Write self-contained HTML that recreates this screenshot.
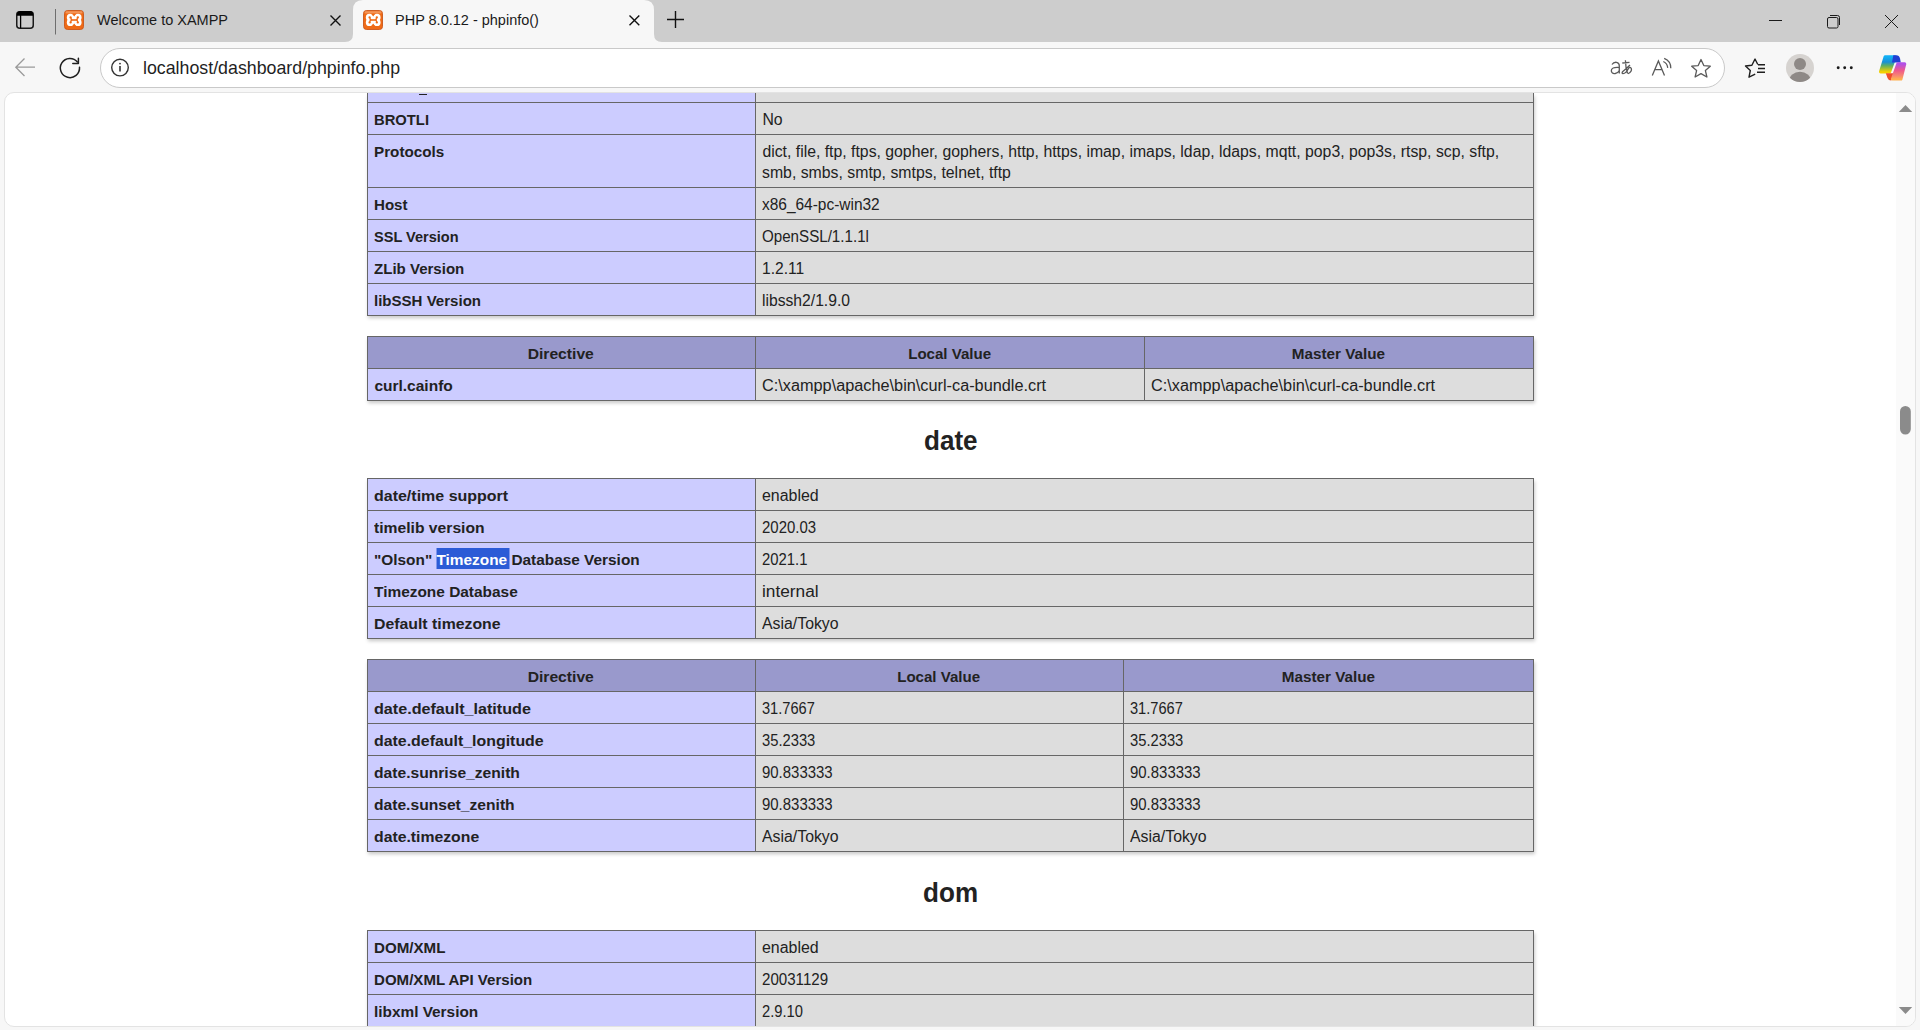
<!DOCTYPE html>
<html><head><meta charset="utf-8"><title>phpinfo</title>
<style>
html,body{margin:0;padding:0;width:1920px;height:1030px;overflow:hidden;background:#f7f7f7;font-family:"Liberation Sans", sans-serif;}
#tabs{position:absolute;left:0;top:0;width:1920px;height:42px;background:#cdcdcd;}
#toolbar{position:absolute;left:0;top:42px;width:1920px;height:51px;background:#f7f7f7;}
#view{position:absolute;left:4px;top:92px;width:1910px;height:933px;background:#fff;border:1px solid #e3e3e3;border-radius:10px;overflow:hidden;}
#page{position:absolute;left:-5px;top:-93px;width:1920px;height:1030px;}
.ln{position:absolute;background:#666666;}
.tr,.tb,.h2{position:absolute;white-space:nowrap;color:#222222;line-height:21px;}
.tr{font-size:15.8px;margin-top:-16px;}
.tb{font-size:15.5px;font-weight:bold;margin-top:-16px;}
.h2{font-size:28px;font-weight:bold;margin-top:-25px;line-height:32px;} .h2 span{display:inline-block;transform:scaleX(0.93);}
.sel{background:#2c5bd6;color:#fff;padding:2.9px 0 1.2px 0;box-shadow:2.5px 0 0 #2c5bd6;}
.ic{position:absolute;}
.tabt{position:absolute;white-space:nowrap;color:#1a1a1a;font-size:15.5px;line-height:20px;margin-top:-15.4px;transform:scaleX(0.935);transform-origin:0 0;}
.url{position:absolute;white-space:nowrap;color:#1f1f1f;font-size:17.8px;line-height:22px;margin-top:-17px;}
#omni{position:absolute;left:100px;top:6px;width:1623px;height:38px;border:1px solid #c9c9c9;border-radius:20px;background:#fff;}
</style></head><body>

<div id="tabs">
 <svg class="ic" style="left:0;top:0" width="720" height="42" viewBox="0 0 720 42">
  <path d="M345 42 Q353 42 353 34 L353 10 Q353 0 363 0 L644 0 Q654 0 654 10 L654 34 Q654 42 662 42 Z" fill="#f7f7f7"/>
  <rect x="16.75" y="11.75" width="16.5" height="16.5" rx="3" fill="none" stroke="#1a1a1a" stroke-width="1.5"/>
  <path d="M17 13.5 Q17.3 11 20 11 L30 11 Q32.8 11 33 13.5 L33 15.7 L17 15.7 Z" fill="#000"/>
  <line x1="20.6" y1="15" x2="20.6" y2="28.2" stroke="#000" stroke-width="1.3"/>
  <line x1="55.5" y1="9" x2="55.5" y2="34.5" stroke="#6e6e6e" stroke-width="1"/>
  <path d="M330.5 15.5 L340.5 25.5 M340.5 15.5 L330.5 25.5" stroke="#111" stroke-width="1.4"/>
  <path d="M629.5 15.5 L639.3 25.3 M639.3 15.5 L629.5 25.3" stroke="#111" stroke-width="1.4"/>
  <path d="M675.5 11 L675.5 28 M667 19.5 L684 19.5" stroke="#111" stroke-width="1.4"/>
 </svg>
 <svg class="ic" style="left:64px;top:10px" width="20" height="20" viewBox="0 0 20 20">
  <rect x="0.5" y="0.5" width="19" height="19" rx="3" fill="#ef6a16" stroke="#c9561a" stroke-width="0.9"/>
  <rect x="1.5" y="1.3" width="17" height="2.2" rx="1" fill="#f4a06a" opacity="0.8"/>
  <g fill="#fff"><circle cx="6.4" cy="7.4" r="3.6"/><circle cx="14" cy="7.4" r="3.6"/><circle cx="6.4" cy="12.4" r="3.6"/><circle cx="14" cy="12.4" r="3.6"/><rect x="6.4" y="5.5" width="7.6" height="9"/></g>
  <g fill="#ef6a16"><circle cx="6.6" cy="7.4" r="1.15"/><circle cx="13.8" cy="7.4" r="1.15"/><circle cx="6.6" cy="12.4" r="1.15"/><circle cx="13.8" cy="12.4" r="1.15"/><rect x="6.6" y="9.2" width="7.2" height="1.6"/><path d="M6.6 7.4 L7.6 9.6 L6.6 12.4 M13.8 7.4 L12.8 9.6 L13.8 12.4" stroke="#ef6a16" stroke-width="1.2" fill="none"/>
  <path d="M8.5 3.8 L10.2 6.6 L11.9 3.8 Z"/><path d="M8.5 16.2 L10.2 13.4 L11.9 16.2 Z"/></g>
 </svg>
 <svg class="ic" style="left:363px;top:10px" width="20" height="20" viewBox="0 0 20 20">
  <rect x="0.5" y="0.5" width="19" height="19" rx="3" fill="#ef6a16" stroke="#c9561a" stroke-width="0.9"/>
  <rect x="1.5" y="1.3" width="17" height="2.2" rx="1" fill="#f4a06a" opacity="0.8"/>
  <g fill="#fff"><circle cx="6.4" cy="7.4" r="3.6"/><circle cx="14" cy="7.4" r="3.6"/><circle cx="6.4" cy="12.4" r="3.6"/><circle cx="14" cy="12.4" r="3.6"/><rect x="6.4" y="5.5" width="7.6" height="9"/></g>
  <g fill="#ef6a16"><circle cx="6.6" cy="7.4" r="1.15"/><circle cx="13.8" cy="7.4" r="1.15"/><circle cx="6.6" cy="12.4" r="1.15"/><circle cx="13.8" cy="12.4" r="1.15"/><rect x="6.6" y="9.2" width="7.2" height="1.6"/><path d="M6.6 7.4 L7.6 9.6 L6.6 12.4 M13.8 7.4 L12.8 9.6 L13.8 12.4" stroke="#ef6a16" stroke-width="1.2" fill="none"/>
  <path d="M8.5 3.8 L10.2 6.6 L11.9 3.8 Z"/><path d="M8.5 16.2 L10.2 13.4 L11.9 16.2 Z"/></g>
 </svg>
 <div class="tabt" style="left:97px;top:25px">Welcome to XAMPP</div>
 <div class="tabt" style="left:395px;top:25px">PHP 8.0.12 - phpinfo()</div>
 <svg class="ic" style="left:1760px;top:0" width="160" height="42" viewBox="1760 0 160 42">
  <line x1="1769" y1="20.5" x2="1782" y2="20.5" stroke="#1a1a1a" stroke-width="1"/>
  <rect x="1827.5" y="17.5" width="10.5" height="10.5" rx="1.5" fill="none" stroke="#1a1a1a" stroke-width="1"/>
  <path d="M1830 15.5 L1837.5 15.5 Q1839.5 15.5 1839.5 17.5 L1839.5 25" fill="none" stroke="#1a1a1a" stroke-width="1"/>
  <path d="M1885 15 L1898 28 M1898 15 L1885 28" stroke="#1a1a1a" stroke-width="1"/>
 </svg>
</div>
<div id="toolbar">
 <div id="omni"></div>
 <div class="url" style="left:143px;top:32px">localhost/dashboard/phpinfo.php</div>
 <svg class="ic" style="left:0;top:0" width="1920" height="51" viewBox="0 42 1920 51">
  <path d="M15.5 67.2 L35 67.2 M24.5 58.5 L15.8 67.2 L24.5 76" fill="none" stroke="#9a9a9a" stroke-width="1.3"/>
  <path d="M77.4 62 A9.6 9.6 0 1 0 79.5 67.3" fill="none" stroke="#1f1f1f" stroke-width="1.5" stroke-linecap="round"/>
  <path d="M72.8 63.6 L78.4 63.6 L78.4 58.2" fill="none" stroke="#1f1f1f" stroke-width="1.5" stroke-linecap="round" stroke-linejoin="round"/>
  <circle cx="120" cy="67.6" r="8.3" fill="none" stroke="#333" stroke-width="1.4"/>
  <line x1="120" y1="66" x2="120" y2="71.5" stroke="#333" stroke-width="1.6"/>
  <circle cx="120" cy="63.6" r="0.9" fill="#333"/>
  
  <g fill="none" stroke="#5a5a5a" stroke-width="1.3">
   <path d="M1612 64.5 Q1613.5 62 1616.5 62.3 Q1619.5 62.8 1619.3 66 L1619.3 73.5 M1619.3 67.5 Q1611 66.8 1611.3 71 Q1611.8 74 1615.3 73.5 Q1618 73 1619.3 70.5"/>
   <path d="M1622.3 63 L1629.5 62.3 M1625.4 60.3 Q1625.6 68 1627.6 73.5 M1630 65 Q1626 69 1622.5 71.8 Q1621.5 73.5 1623 73.6 Q1626 73.5 1628.5 68.5 Q1630 66.2 1631.3 68.5 Q1632.3 71.5 1628 73.8"/>
   <path d="M1652.3 75.5 L1658.4 61 L1664.5 75.5 M1654.8 69.6 L1662 69.6"/>
   <path d="M1663.3 61.5 A7.5 7.5 0 0 1 1667.7 67.9 M1664.2 58.3 A10.5 10.5 0 0 1 1670.8 68.3"/>
   <path d="M1701 59.5 L1703.8 65.6 L1710.3 66.2 L1705.4 70.6 L1706.9 77 L1701 73.6 L1695.1 77 L1696.6 70.6 L1691.7 66.2 L1698.2 65.6 Z" stroke-linejoin="round"/>
  </g>
  <g fill="none" stroke="#1f1f1f" stroke-width="1.4" stroke-linejoin="round">
   <path d="M1757.8 64.5 L1755 59 L1751.9 65.3 L1745.5 66 L1750.3 70.5 L1749 77.2 L1755.2 74.2"/>
   <path d="M1758 64.8 L1765 64.8 M1758 68.5 L1765 68.5 M1757 72.3 L1765 72.3"/>
  </g>
  <circle cx="1800" cy="68" r="14" fill="#d6d3d0"/>
  <circle cx="1800" cy="64" r="6" fill="#8e8986"/>
  <clipPath id="pc"><circle cx="1800" cy="68" r="14"/></clipPath>
  <ellipse cx="1800" cy="81.5" rx="11" ry="9.8" fill="#8e8986" clip-path="url(#pc)"/>
  <g fill="#1a1a1a"><circle cx="1838.2" cy="67.7" r="1.45"/><circle cx="1844.7" cy="67.7" r="1.45"/><circle cx="1851.3" cy="67.7" r="1.45"/></g>
  <defs>
   <linearGradient id="cg1" x1="0" y1="0" x2="0" y2="1"><stop offset="0" stop-color="#12b0f5"/><stop offset="0.35" stop-color="#1890d8"/><stop offset="0.6" stop-color="#60b060"/><stop offset="1" stop-color="#f5d000"/></linearGradient>
   <linearGradient id="cg2" x1="0" y1="0" x2="0" y2="1"><stop offset="0" stop-color="#b050e8"/><stop offset="0.45" stop-color="#f05a8a"/><stop offset="0.8" stop-color="#f88a70"/><stop offset="1" stop-color="#ffb050"/></linearGradient>
  </defs>
  <g transform="translate(1872 50)" stroke-linejoin="round">
  <path d="M13.2 6.8 L23.1 6.8 L17.6 21.8 L8.6 21.8 Z" fill="url(#cg1)" stroke="url(#cg1)" stroke-width="3.2"/>
  <path d="M21.3 5.2 L24.3 5.2 Q27.2 5.2 28 8.5 L28.8 12.4 L20 12.4 Z" fill="#2140d2"/>
  <path d="M13.8 23.2 L21.7 23.2 L19.2 30.6 Q16.5 30.6 15.5 28 Z" fill="#f04e2a"/>
  <path d="M25.9 13.9 L32.7 13.9 L28.9 29 L20.5 29 Z" fill="url(#cg2)" stroke="url(#cg2)" stroke-width="3.2"/>
 </g>

 </svg>
</div>

<div id="view"><div id="page">
<div style="position:absolute;left:367px;top:93px;width:1167px;height:223px;box-shadow:1px 2.5px 3.5px #cccccc"></div>
<div style="position:absolute;left:367px;top:93px;width:388px;height:9px;background:#ccccff"></div>
<div style="position:absolute;left:755px;top:93px;width:778px;height:9px;background:#dddddd"></div>
<div style="position:absolute;left:367px;top:102px;width:388px;height:32px;background:#ccccff"></div>
<div style="position:absolute;left:755px;top:102px;width:778px;height:32px;background:#dddddd"></div>
<div style="position:absolute;left:367px;top:134px;width:388px;height:53px;background:#ccccff"></div>
<div style="position:absolute;left:755px;top:134px;width:778px;height:53px;background:#dddddd"></div>
<div style="position:absolute;left:367px;top:187px;width:388px;height:32px;background:#ccccff"></div>
<div style="position:absolute;left:755px;top:187px;width:778px;height:32px;background:#dddddd"></div>
<div style="position:absolute;left:367px;top:219px;width:388px;height:32px;background:#ccccff"></div>
<div style="position:absolute;left:755px;top:219px;width:778px;height:32px;background:#dddddd"></div>
<div style="position:absolute;left:367px;top:251px;width:388px;height:32px;background:#ccccff"></div>
<div style="position:absolute;left:755px;top:251px;width:778px;height:32px;background:#dddddd"></div>
<div style="position:absolute;left:367px;top:283px;width:388px;height:32px;background:#ccccff"></div>
<div style="position:absolute;left:755px;top:283px;width:778px;height:32px;background:#dddddd"></div>
<div class="ln" style="left:367px;top:102px;width:1167px;height:1px"></div>
<div class="ln" style="left:367px;top:134px;width:1167px;height:1px"></div>
<div class="ln" style="left:367px;top:187px;width:1167px;height:1px"></div>
<div class="ln" style="left:367px;top:219px;width:1167px;height:1px"></div>
<div class="ln" style="left:367px;top:251px;width:1167px;height:1px"></div>
<div class="ln" style="left:367px;top:283px;width:1167px;height:1px"></div>
<div class="ln" style="left:367px;top:315px;width:1167px;height:1px"></div>
<div class="ln" style="left:367px;top:93px;width:1px;height:223px"></div>
<div class="ln" style="left:755px;top:93px;width:1px;height:223px"></div>
<div class="ln" style="left:1533px;top:93px;width:1px;height:223px"></div>
<div class="tb" style="left:374.4px;top:125px;transform:scaleX(0.9536);transform-origin:0 0">BROTLI</div>
<div class="tr" style="left:762.4px;top:125px;transform:scaleX(1.0000);transform-origin:0 0">No</div>
<div class="tb" style="left:374.4px;top:157px;transform:scaleX(0.9829);transform-origin:0 0">Protocols</div>
<div class="tr" style="left:762.4px;top:157px;transform:scaleX(1.0000);transform-origin:0 0">dict, file, ftp, ftps, gopher, gophers, http, https, imap, imaps, ldap, ldaps, mqtt, pop3, pop3s, rtsp, scp, sftp,</div>
<div class="tr" style="left:762.4px;top:178px;transform:scaleX(1.0020);transform-origin:0 0">smb, smbs, smtp, smtps, telnet, tftp</div>
<div class="tb" style="left:374.4px;top:210px;transform:scaleX(0.9735);transform-origin:0 0">Host</div>
<div class="tr" style="left:762.4px;top:210px;transform:scaleX(0.9783);transform-origin:0 0">x86_64-pc-win32</div>
<div class="tb" style="left:374.4px;top:242px;transform:scaleX(0.9378);transform-origin:0 0">SSL Version</div>
<div class="tr" style="left:762.4px;top:242px;transform:scaleX(0.9586);transform-origin:0 0">OpenSSL/1.1.1l</div>
<div class="tb" style="left:374.4px;top:274px;transform:scaleX(0.9707);transform-origin:0 0">ZLib Version</div>
<div class="tr" style="left:762.4px;top:274px;transform:scaleX(0.9878);transform-origin:0 0">1.2.11</div>
<div class="tb" style="left:374.4px;top:306px;transform:scaleX(0.9706);transform-origin:0 0">libSSH Version</div>
<div class="tr" style="left:762.4px;top:306px;transform:scaleX(0.9920);transform-origin:0 0">libssh2/1.9.0</div>
<div style="position:absolute;left:419px;top:94px;width:8.3px;height:1.3px;background:#222"></div>
<div style="position:absolute;left:367px;top:336px;width:1167px;height:65px;box-shadow:1px 2.5px 3.5px #cccccc"></div>
<div style="position:absolute;left:367px;top:336px;width:388px;height:32px;background:#9999cc"></div>
<div style="position:absolute;left:755px;top:336px;width:389px;height:32px;background:#9999cc"></div>
<div style="position:absolute;left:1144px;top:336px;width:389px;height:32px;background:#9999cc"></div>
<div style="position:absolute;left:367px;top:368px;width:388px;height:32px;background:#ccccff"></div>
<div style="position:absolute;left:755px;top:368px;width:389px;height:32px;background:#dddddd"></div>
<div style="position:absolute;left:1144px;top:368px;width:389px;height:32px;background:#dddddd"></div>
<div class="ln" style="left:367px;top:336px;width:1167px;height:1px"></div>
<div class="ln" style="left:367px;top:368px;width:1167px;height:1px"></div>
<div class="ln" style="left:367px;top:400px;width:1167px;height:1px"></div>
<div class="ln" style="left:367px;top:336px;width:1px;height:65px"></div>
<div class="ln" style="left:755px;top:336px;width:1px;height:65px"></div>
<div class="ln" style="left:1144px;top:336px;width:1px;height:65px"></div>
<div class="ln" style="left:1533px;top:336px;width:1px;height:65px"></div>
<div class="tb" style="left:367px;top:359px;width:388px;text-align:center"><span style="display:inline-block;transform:scaleX(1.0109)">Directive</span></div>
<div class="tb" style="left:755px;top:359px;width:389px;text-align:center"><span style="display:inline-block;transform:scaleX(0.9726)">Local Value</span></div>
<div class="tb" style="left:1144px;top:359px;width:389px;text-align:center"><span style="display:inline-block;transform:scaleX(0.9840)">Master Value</span></div>
<div class="tb" style="left:374.4px;top:391px;transform:scaleX(1.0000);transform-origin:0 0">curl.cainfo</div>
<div class="tr" style="left:762.4px;top:391px;transform:scaleX(1.0305);transform-origin:0 0">C:\xampp\apache\bin\curl-ca-bundle.crt</div>
<div class="tr" style="left:1151.4px;top:391px;transform:scaleX(1.0305);transform-origin:0 0">C:\xampp\apache\bin\curl-ca-bundle.crt</div>
<div class="h2" style="left:367px;top:450px;width:1167px;text-align:center"><span>date</span></div>
<div style="position:absolute;left:367px;top:478px;width:1167px;height:161px;box-shadow:1px 2.5px 3.5px #cccccc"></div>
<div style="position:absolute;left:367px;top:478px;width:388px;height:32px;background:#ccccff"></div>
<div style="position:absolute;left:755px;top:478px;width:778px;height:32px;background:#dddddd"></div>
<div style="position:absolute;left:367px;top:510px;width:388px;height:32px;background:#ccccff"></div>
<div style="position:absolute;left:755px;top:510px;width:778px;height:32px;background:#dddddd"></div>
<div style="position:absolute;left:367px;top:542px;width:388px;height:32px;background:#ccccff"></div>
<div style="position:absolute;left:755px;top:542px;width:778px;height:32px;background:#dddddd"></div>
<div style="position:absolute;left:367px;top:574px;width:388px;height:32px;background:#ccccff"></div>
<div style="position:absolute;left:755px;top:574px;width:778px;height:32px;background:#dddddd"></div>
<div style="position:absolute;left:367px;top:606px;width:388px;height:32px;background:#ccccff"></div>
<div style="position:absolute;left:755px;top:606px;width:778px;height:32px;background:#dddddd"></div>
<div class="ln" style="left:367px;top:478px;width:1167px;height:1px"></div>
<div class="ln" style="left:367px;top:510px;width:1167px;height:1px"></div>
<div class="ln" style="left:367px;top:542px;width:1167px;height:1px"></div>
<div class="ln" style="left:367px;top:574px;width:1167px;height:1px"></div>
<div class="ln" style="left:367px;top:606px;width:1167px;height:1px"></div>
<div class="ln" style="left:367px;top:638px;width:1167px;height:1px"></div>
<div class="ln" style="left:367px;top:478px;width:1px;height:161px"></div>
<div class="ln" style="left:755px;top:478px;width:1px;height:161px"></div>
<div class="ln" style="left:1533px;top:478px;width:1px;height:161px"></div>
<div class="tb" style="left:374.4px;top:501px;transform:scaleX(1.0315);transform-origin:0 0">date/time support</div>
<div class="tr" style="left:762.4px;top:501px;transform:scaleX(1.0089);transform-origin:0 0">enabled</div>
<div class="tb" style="left:374.4px;top:533px;transform:scaleX(1.0110);transform-origin:0 0">timelib version</div>
<div class="tr" style="left:762.4px;top:533px;transform:scaleX(0.9474);transform-origin:0 0">2020.03</div>
<div class="tb" style="left:374.4px;top:565px;transform:scaleX(0.9925);transform-origin:0 0">"Olson" <span class="sel">Timezone</span> Database Version</div>
<div class="tr" style="left:762.4px;top:565px;transform:scaleX(0.9396);transform-origin:0 0">2021.1</div>
<div class="tb" style="left:374.4px;top:597px;transform:scaleX(0.9951);transform-origin:0 0">Timezone Database</div>
<div class="tr" style="left:762.4px;top:597px;transform:scaleX(1.0940);transform-origin:0 0">internal</div>
<div class="tb" style="left:374.4px;top:629px;transform:scaleX(1.0203);transform-origin:0 0">Default timezone</div>
<div class="tr" style="left:762.4px;top:629px;transform:scaleX(1.0026);transform-origin:0 0">Asia/Tokyo</div>
<div style="position:absolute;left:367px;top:659px;width:1167px;height:193px;box-shadow:1px 2.5px 3.5px #cccccc"></div>
<div style="position:absolute;left:367px;top:659px;width:388px;height:32px;background:#9999cc"></div>
<div style="position:absolute;left:755px;top:659px;width:368px;height:32px;background:#9999cc"></div>
<div style="position:absolute;left:1123px;top:659px;width:410px;height:32px;background:#9999cc"></div>
<div style="position:absolute;left:367px;top:691px;width:388px;height:32px;background:#ccccff"></div>
<div style="position:absolute;left:755px;top:691px;width:368px;height:32px;background:#dddddd"></div>
<div style="position:absolute;left:1123px;top:691px;width:410px;height:32px;background:#dddddd"></div>
<div style="position:absolute;left:367px;top:723px;width:388px;height:32px;background:#ccccff"></div>
<div style="position:absolute;left:755px;top:723px;width:368px;height:32px;background:#dddddd"></div>
<div style="position:absolute;left:1123px;top:723px;width:410px;height:32px;background:#dddddd"></div>
<div style="position:absolute;left:367px;top:755px;width:388px;height:32px;background:#ccccff"></div>
<div style="position:absolute;left:755px;top:755px;width:368px;height:32px;background:#dddddd"></div>
<div style="position:absolute;left:1123px;top:755px;width:410px;height:32px;background:#dddddd"></div>
<div style="position:absolute;left:367px;top:787px;width:388px;height:32px;background:#ccccff"></div>
<div style="position:absolute;left:755px;top:787px;width:368px;height:32px;background:#dddddd"></div>
<div style="position:absolute;left:1123px;top:787px;width:410px;height:32px;background:#dddddd"></div>
<div style="position:absolute;left:367px;top:819px;width:388px;height:32px;background:#ccccff"></div>
<div style="position:absolute;left:755px;top:819px;width:368px;height:32px;background:#dddddd"></div>
<div style="position:absolute;left:1123px;top:819px;width:410px;height:32px;background:#dddddd"></div>
<div class="ln" style="left:367px;top:659px;width:1167px;height:1px"></div>
<div class="ln" style="left:367px;top:691px;width:1167px;height:1px"></div>
<div class="ln" style="left:367px;top:723px;width:1167px;height:1px"></div>
<div class="ln" style="left:367px;top:755px;width:1167px;height:1px"></div>
<div class="ln" style="left:367px;top:787px;width:1167px;height:1px"></div>
<div class="ln" style="left:367px;top:819px;width:1167px;height:1px"></div>
<div class="ln" style="left:367px;top:851px;width:1167px;height:1px"></div>
<div class="ln" style="left:367px;top:659px;width:1px;height:193px"></div>
<div class="ln" style="left:755px;top:659px;width:1px;height:193px"></div>
<div class="ln" style="left:1123px;top:659px;width:1px;height:193px"></div>
<div class="ln" style="left:1533px;top:659px;width:1px;height:193px"></div>
<div class="tb" style="left:367px;top:682px;width:388px;text-align:center"><span style="display:inline-block;transform:scaleX(1.0109)">Directive</span></div>
<div class="tb" style="left:755px;top:682px;width:368px;text-align:center"><span style="display:inline-block;transform:scaleX(0.9726)">Local Value</span></div>
<div class="tb" style="left:1123px;top:682px;width:410px;text-align:center"><span style="display:inline-block;transform:scaleX(0.9840)">Master Value</span></div>
<div class="tb" style="left:374.4px;top:714px;transform:scaleX(1.0407);transform-origin:0 0">date.default_latitude</div>
<div class="tr" style="left:762.4px;top:714px;transform:scaleX(0.9246);transform-origin:0 0">31.7667</div>
<div class="tr" style="left:1130.4px;top:714px;transform:scaleX(0.9246);transform-origin:0 0">31.7667</div>
<div class="tb" style="left:374.4px;top:746px;transform:scaleX(1.0261);transform-origin:0 0">date.default_longitude</div>
<div class="tr" style="left:762.4px;top:746px;transform:scaleX(0.9333);transform-origin:0 0">35.2333</div>
<div class="tr" style="left:1130.4px;top:746px;transform:scaleX(0.9333);transform-origin:0 0">35.2333</div>
<div class="tb" style="left:374.4px;top:778px;transform:scaleX(1.0083);transform-origin:0 0">date.sunrise_zenith</div>
<div class="tr" style="left:762.4px;top:778px;transform:scaleX(0.9459);transform-origin:0 0">90.833333</div>
<div class="tr" style="left:1130.4px;top:778px;transform:scaleX(0.9459);transform-origin:0 0">90.833333</div>
<div class="tb" style="left:374.4px;top:810px;transform:scaleX(1.0079);transform-origin:0 0">date.sunset_zenith</div>
<div class="tr" style="left:762.4px;top:810px;transform:scaleX(0.9459);transform-origin:0 0">90.833333</div>
<div class="tr" style="left:1130.4px;top:810px;transform:scaleX(0.9459);transform-origin:0 0">90.833333</div>
<div class="tb" style="left:374.4px;top:842px;transform:scaleX(1.0175);transform-origin:0 0">date.timezone</div>
<div class="tr" style="left:762.4px;top:842px;transform:scaleX(1.0026);transform-origin:0 0">Asia/Tokyo</div>
<div class="tr" style="left:1130.4px;top:842px;transform:scaleX(1.0026);transform-origin:0 0">Asia/Tokyo</div>
<div class="h2" style="left:367px;top:902px;width:1167px;text-align:center"><span>dom</span></div>
<div style="position:absolute;left:367px;top:930px;width:1167px;height:129px;box-shadow:1px 2.5px 3.5px #cccccc"></div>
<div style="position:absolute;left:367px;top:930px;width:388px;height:32px;background:#ccccff"></div>
<div style="position:absolute;left:755px;top:930px;width:778px;height:32px;background:#dddddd"></div>
<div style="position:absolute;left:367px;top:962px;width:388px;height:32px;background:#ccccff"></div>
<div style="position:absolute;left:755px;top:962px;width:778px;height:32px;background:#dddddd"></div>
<div style="position:absolute;left:367px;top:994px;width:388px;height:32px;background:#ccccff"></div>
<div style="position:absolute;left:755px;top:994px;width:778px;height:32px;background:#dddddd"></div>
<div style="position:absolute;left:367px;top:1026px;width:388px;height:32px;background:#ccccff"></div>
<div style="position:absolute;left:755px;top:1026px;width:778px;height:32px;background:#dddddd"></div>
<div class="ln" style="left:367px;top:930px;width:1167px;height:1px"></div>
<div class="ln" style="left:367px;top:962px;width:1167px;height:1px"></div>
<div class="ln" style="left:367px;top:994px;width:1167px;height:1px"></div>
<div class="ln" style="left:367px;top:1026px;width:1167px;height:1px"></div>
<div class="ln" style="left:367px;top:1058px;width:1167px;height:1px"></div>
<div class="ln" style="left:367px;top:930px;width:1px;height:129px"></div>
<div class="ln" style="left:755px;top:930px;width:1px;height:129px"></div>
<div class="ln" style="left:1533px;top:930px;width:1px;height:129px"></div>
<div class="tb" style="left:374.4px;top:953px;transform:scaleX(0.9764);transform-origin:0 0">DOM/XML</div>
<div class="tr" style="left:762.4px;top:953px;transform:scaleX(1.0089);transform-origin:0 0">enabled</div>
<div class="tb" style="left:374.4px;top:985px;transform:scaleX(0.9720);transform-origin:0 0">DOM/XML API Version</div>
<div class="tr" style="left:762.4px;top:985px;transform:scaleX(0.9565);transform-origin:0 0">20031129</div>
<div class="tb" style="left:374.4px;top:1017px;transform:scaleX(0.9913);transform-origin:0 0">libxml Version</div>
<div class="tr" style="left:762.4px;top:1017px;transform:scaleX(0.9318);transform-origin:0 0">2.9.10</div>
<div class="tb" style="left:374.4px;top:1049px;transform:scaleX(1.0000);transform-origin:0 0">x</div>
<div class="tr" style="left:762.4px;top:1049px;transform:scaleX(1.0000);transform-origin:0 0">x</div>
<div style="position:absolute;left:1896px;top:93px;width:19px;height:933px;background:#fafafa"></div>
<svg class="ic" style="left:1896px;top:93px" width="19" height="933" viewBox="1896 93 19 933">
 <path d="M1898.8 112 L1905.5 105 L1912.2 112 Z" fill="#8b8b8b"/>
 <rect x="1900" y="406" width="10.8" height="28.5" rx="5.4" fill="#8b8b8b"/>
 <path d="M1898.8 1007 L1912.2 1007 L1905.5 1014 Z" fill="#8b8b8b"/>
</svg>
</div></div>
</body></html>
